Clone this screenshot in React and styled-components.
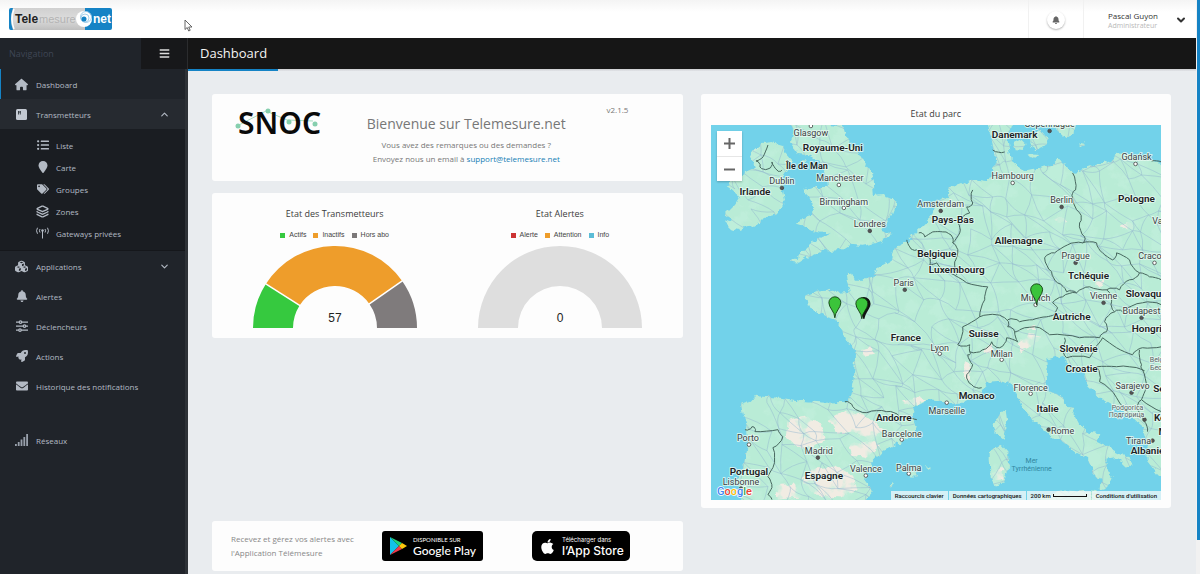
import React from "react";
import styled, { createGlobalStyle } from "styled-components";
import { FaListUl, FaTags, FaBell, FaRocket, FaEnvelope, FaApple, FaBars } from "react-icons/fa";
import { FaHouse, FaCubes, FaLocationPin } from "react-icons/fa6";
import { Layers, ChevronUp, ChevronDown } from "lucide-react";

const GlobalStyle = createGlobalStyle`
  *, *::before, *::after { box-sizing: border-box; }
  body {
    margin: 0;
    background: #e9ecef;
    color: #333;
    font-family: "Open Sans", "Noto Sans", sans-serif;
    font-size: 8px;
  }
  button { font: inherit; color: inherit; border: 0; padding: 0; background: none; cursor: pointer; }
  a { text-decoration: none; color: inherit; }
  h1, h2, p, ul, dl { margin: 0; padding: 0; font-weight: 400; }
  ul { list-style: none; }
  svg { display: block; }
`;

/* ---------- frame ---------- */
const Page = styled.div`
  display: flex;
  min-height: 100vh;
`;
const Column = styled.div`
  flex: 1;
  min-width: 0;
  display: flex;
  flex-direction: column;
`;
const Rail = styled.div`
  width: 4px;
  background: #f1f1f1;
`;
const RailThumb = styled.div`
  height: 94vh;
  margin-left: 1px;
  background: #1583c5;
`;
const Header = styled.header`
  height: 38px;
  display: flex;
  align-items: stretch;
  justify-content: space-between;
  background: linear-gradient(#f4f4f4, #fff 12px);
  padding-left: 9px;
`;
const LogoLink = styled.a`
  align-self: center;
`;
const HeaderTools = styled.div`
  display: flex;
`;
const BellCell = styled.div`
  width: 56px;
  display: flex;
  align-items: center;
  justify-content: center;
  border-left: 1px solid #f1f1f1;
  border-right: 1px solid #f1f1f1;
  padding-top: 2px;
`;
const RoundButton = styled.button`
  width: 18px;
  height: 18px;
  border-radius: 50%;
  display: grid;
  place-items: center;
  background: #fff;
  color: #666;
  box-shadow: 0 1px 2px rgba(0, 0, 0, 0.3);
`;
const UserMenu = styled.button`
  width: 112px;
  display: flex;
  align-items: center;
  justify-content: space-between;
  padding: 2px 9px 0 24px;
  text-align: left;
`;
const UserName = styled.span`
  display: block;
  font-size: 8px;
  line-height: 10px;
  color: #333;
`;
const UserRole = styled.span`
  display: block;
  font-size: 7px;
  line-height: 9px;
  color: #b9b9b9;
`;
const Body = styled.div`
  flex: 1;
  display: flex;
`;
const Pointer = styled.svg`
  position: absolute;
  left: 184px;
  top: 19px;
`;

/* ---------- sidebar ---------- */
const Sidebar = styled.nav`
  width: 188px;
  flex: none;
  background: #20242a;
  border-right: 3px solid #2e3237;
  color: #b3bac4;
`;
const NavHead = styled.div`
  height: 31px;
  margin-right: -3px;
  padding-left: 9px;
  display: flex;
  align-items: center;
  justify-content: space-between;
  font-size: 9px;
  color: #3f4655;
`;
const ToggleButton = styled.button`
  width: 47px;
  height: 31px;
  display: grid;
  place-items: center;
  background: #17181a;
  border-right: 1px solid #2b2c2e;
  color: #ddd;
`;
const NavLink = styled.a`
  height: 30px;
  display: flex;
  align-items: center;
  gap: 8px;
  padding: 0 15px 0 ${(p) => (p.$active ? "14px" : "15px")};
  border-left: ${(p) => (p.$active ? "1px solid #1583c5" : "0")};
  background: ${(p) => (p.$open ? "#262a30" : "transparent")};
  margin-top: ${(p) => (p.$apart ? "24px" : "0")};
`;
const IconBox = styled.span`
  width: 13px;
  display: grid;
  place-items: center;
`;
const NavText = styled.span`
  flex: 1;
  white-space: nowrap;
`;
const SubMenu = styled.ul`
  background: #1a1d22;
  padding: 5px 0 6px;
  border-bottom: 1px solid #15171b;
`;
const SubLink = styled.a`
  height: 22px;
  display: flex;
  align-items: center;
  gap: 7px;
  padding-left: 36px;
`;

/* ---------- content ---------- */
const Main = styled.main`
  flex: 1;
  min-width: 0;
`;
const TitleBar = styled.div`
  height: 31px;
  padding-left: 12px;
  background: #161616;
  color: #f4f4f4;
`;
const PageTitle = styled.h1`
  font-size: 13px;
  line-height: 30px;
`;
const TitleRule = styled.div`
  height: 2px;
  background: linear-gradient(#cdced1, #e2e4e8);
`;
const TitleAccent = styled.div`
  width: 90px;
  height: 2px;
  background: #1583c5;
`;
const Board = styled.div`
  display: grid;
  grid-template-columns: 1fr 1fr;
  align-items: start;
  gap: 18px;
  padding: 23px 25px 2px 24px;
`;
const Stack = styled.div`
  display: flex;
  flex-direction: column;
  gap: 12px;
`;
const Card = styled.section`
  background: #fdfdfd;
  border-radius: 3px;
`;
const WelcomeCard = styled(Card)`
  display: grid;
  grid-template-columns: 132px 1fr 94px;
  height: 87px;
`;
const LogoSlot = styled.div`
  padding: 12px 0 0 23px;
`;
const WelcomeText = styled.div`
  padding-top: 20px;
  text-align: center;
  font-size: 8px;
  line-height: 14px;
  color: #777;
`;
const WelcomeTitle = styled.h2`
  font-size: 14px;
  line-height: 20px;
  margin-bottom: 4px;
  color: #777;
  white-space: nowrap;
`;
const MailLink = styled.a`
  color: #1780b5;
`;
const Version = styled.span`
  padding: 9px 0 0 18px;
  line-height: 14px;
  color: #777;
`;
const GaugeCard = styled(Card)`
  display: grid;
  grid-template-columns: 1fr 1fr;
  padding: 13px 10px 10px;
`;
const GaugeCell = styled.div`
  display: flex;
  flex-direction: column;
  align-items: center;
`;
const CardTitle = styled.h2`
  font-size: 9px;
  line-height: 16px;
  color: #3c3c3c;
  text-align: center;
`;
const Legend = styled.ul`
  display: flex;
  gap: 7px;
  margin: 7px 0 5px;
  font: 7px/12px "Liberation Sans", sans-serif;
  color: #444;
`;
const LegendItem = styled.li`
  display: flex;
  align-items: center;
  gap: 4px;
  &::before {
    content: "";
    width: 5px;
    height: 5px;
    background: ${(p) => p.$color};
  }
`;
const AppCard = styled(Card)`
  margin-top: 171px;
  height: 50px;
  display: grid;
  grid-template-columns: 151px 150px 1fr;
  align-items: center;
  padding-left: 19px;
  color: #888;
  line-height: 14px;
`;
const StoreBadge = styled.a`
  width: ${(p) => p.$width}px;
  height: 30px;
  display: flex;
  align-items: center;
  gap: 6px;
  padding-left: 7px;
  border-radius: ${(p) => p.$radius}px;
  background: #000;
  color: #fff;
  white-space: nowrap;
`;
const BadgeSmall = styled.span`
  display: block;
  font: 6px/8px ${(p) => p.$face}, sans-serif;
`;
const BadgeLarge = styled.span`
  display: block;
  font: 500 12px/13px ${(p) => p.$face}, sans-serif;
`;
const MapCard = styled(Card)`
  padding: 12px 10px 8px;
`;
const MapTitle = styled(CardTitle)`
  margin-bottom: 3px;
`;
const MapFrame = styled.div`
  position: relative;
  background: #72d2ea;
`;
const ZoomControl = styled.div`
  position: absolute;
  left: 6px;
  top: 6px;
  width: 25px;
  background: #fff;
  box-shadow: 0 1px 2px rgba(0, 0, 0, 0.25);
`;
const ZoomButton = styled.button`
  width: 25px;
  height: 25px;
  display: grid;
  place-items: center;
  & + & { border-top: 1px solid #e6e6e6; }
`;
const MapFooter = styled.div`
  position: absolute;
  right: 0;
  bottom: 0;
  display: flex;
  gap: 1px;
  font: 500 6px/9px Roboto, sans-serif;
  color: #111;
`;
const FooterItem = styled.span`
  display: flex;
  align-items: center;
  gap: 2px;
  padding: 0 4px;
  background: rgba(245, 250, 250, 0.75);
`;
const ScaleBar = styled.span`
  width: 34px;
  height: 3px;
  border: 1px solid #111;
  border-top: 0;
`;

/* ---------- icons ---------- */
const ModuleIcon = () => (
  <svg width="11" height="11" viewBox="0 0 11 11">
    <rect width="11" height="11" rx="1.5" fill="#c3c9d2" />
    <path d="M2.500 2v3.500M4.300 2v3.500M2 3h3" stroke="#30353c" strokeWidth="0.900" />
  </svg>
);
const AntennaIcon = () => (
  <svg width="13" height="12" viewBox="0 0 26 24" fill="none" stroke="#b3bac4" strokeWidth="2">
    <path d="M13 7v16M8 11a6 6 0 0 1 0-7M18 11a6 6 0 0 0 0-7M3 13.500a11 11 0 0 1 0-12M23 13.500a11 11 0 0 0 0-12" />
    <circle cx="13" cy="7" r="2.500" fill="#b3bac4" stroke="none" />
  </svg>
);
const SlidersIcon = () => (
  <svg width="12" height="12" viewBox="0 0 24 24" fill="#20242a" stroke="#b3bac4" strokeWidth="2.500">
    <path d="M0 4h24M0 12h24M0 20h24" />
    <circle cx="9" cy="4" r="2.500" />
    <circle cx="17" cy="12" r="2.500" />
    <circle cx="8" cy="20" r="2.500" />
  </svg>
);
const SignalIcon = () => (
  <svg width="13" height="12" viewBox="0 0 13 12" fill="#98a0ab">
    <rect x="0" y="10" width="1.800" height="2" />
    <rect x="2.800" y="8" width="1.800" height="4" />
    <rect x="5.600" y="5.500" width="1.800" height="6.500" />
    <rect x="8.400" y="3" width="1.800" height="9" />
    <rect x="11.200" y="0" width="1.800" height="12" />
  </svg>
);
const PlayIcon = () => (
  <svg width="18" height="20" viewBox="0 0 18 20">
    <path d="M1 1v18l9-9z" fill="#12c2e9" />
    <path d="M1 1l9 9 3-3z" fill="#22d37a" />
    <path d="M1 19l9-9 3 3z" fill="#f0394b" />
    <path d="M13 7l5 3-5 3-3-3z" fill="#fdc70c" />
  </svg>
);

const BrandLogo = () => (
  <svg width="103" height="22" viewBox="0 0 103 22" fontFamily="Liberation Sans, sans-serif" role="img" aria-label="Telemesure.net">
    <defs>
      <linearGradient id="brandGrey" x1="0" y1="0" x2="0" y2="1">
        <stop offset="0" stopColor="#d0d0d0" />
        <stop offset="0.5" stopColor="#dcdcdc" />
        <stop offset="1" stopColor="#bfbfbf" />
      </linearGradient>
    </defs>
    <rect x="1" width="84" height="22" rx="2" fill="url(#brandGrey)" />
    <path d="M4 0H2a2 2 0 0 0-2 2v18a2 2 0 0 0 2 2h2Q0 11 4 0z" fill="#1583c5" />
    <path d="M5 1Q1 11 5 21" fill="none" stroke="#fff" strokeWidth="1.500" />
    <path d="M76 0h25a2 2 0 0 1 2 2v18a2 2 0 0 1-2 2H76z" fill="#1583c5" />
    <circle cx="75" cy="11" r="8" fill="#fff" />
    <circle cx="77" cy="9" r="5.500" fill="none" stroke="#8fc4e6" strokeWidth="0.800" />
    <circle cx="76" cy="10" r="4" fill="none" stroke="#8fc4e6" strokeWidth="0.800" />
    <circle cx="75" cy="11" r="2.500" fill="#1583c5" />
    <text x="6" y="15" fontWeight="700" fontSize="12" fill="#222">Tele</text>
    <text x="30" y="15" fontSize="11" fill="#b3b3b3">mesure</text>
    <text x="84" y="15" fontWeight="700" fontSize="12" fill="#fff">net</text>
  </svg>
);

const SnocLogo = () => (
  <svg width="96" height="44" viewBox="0 0 96 44" role="img" aria-label="SNOC">
    <path d="M4 19L31 5L52 14L78 15" fill="none" stroke="#a6dcc1" strokeWidth="1" />
    <text x="3" y="28" fontFamily="Noto Sans" fontWeight="600" fontSize="30" fill="#0a0a0a">SNOC</text>
    <circle cx="3" cy="20" r="2.500" fill="#86cfae" />
    <circle cx="33" cy="5" r="2.500" fill="#86cfae" />
    <circle cx="54" cy="16" r="2.500" fill="#86cfae" />
    <circle cx="80" cy="18" r="2.500" fill="#86cfae" />
  </svg>
);

/* ---------- half-ring gauge ---------- */
const polar = (r, deg) => {
  const a = (deg * Math.PI) / 180;
  return `${(82 - r * Math.cos(a)).toFixed(2)} ${(82 - r * Math.sin(a)).toFixed(2)}`;
};
const slice = (from, to) =>
  `M${polar(82, from)}A82 82 0 0 1 ${polar(82, to)}L${polar(42, to)}A42 42 0 0 0 ${polar(42, from)}Z`;

function Gauge({ title, legend, slices, total }) {
  return (
    <GaugeCell>
      <CardTitle>{title}</CardTitle>
      <Legend>
        {legend.map(([name, color]) => (
          <LegendItem key={name} $color={color}>{name}</LegendItem>
        ))}
      </Legend>
      <svg width="164" height="82" viewBox="0 0 164 82" role="img" aria-label={title}>
        {slices.map(([from, to, color]) => (
          <path key={from} d={slice(from, to)} fill={color} />
        ))}
        {slices.slice(1).map(([from]) => (
          <path key={from} d={`M${polar(83, from)}L${polar(41, from)}`} stroke="#fff" strokeWidth="1.500" />
        ))}
        <text x="82" y="76" textAnchor="middle" fontFamily="Liberation Sans" fontSize="12" fill="#222">{total}</text>
      </svg>
    </GaugeCell>
  );
}

/* ---------- map ---------- */
const LAND = [
  // Great Britain
  "843,125 847,140 857,150 863,160 871,170 873,182 874,196 883,195 893,198 896,205 892,215 886,223 882,230 892,234 887,239 877,243 863,246 850,245 842,250 832,251 823,250 817,253 807,257 798,263 792,262 803,253 812,243 822,237 832,234 817,232 807,227 797,224 803,218 812,215 813,207 808,198 804,190 813,187 828,187 827,177 823,170 820,162 807,155 798,154 790,142 795,132 789,122",
  "802,164 806,160 804,167",
  // Ireland
  "750,153 762,143 772,142 783,145 787,155 792,161 788,168 782,177 783,190 785,200 782,208 775,215 767,217 753,225 740,230 730,228 725,223 731,219 725,215 735,205 740,197 728,187 733,178 743,173 754,168",
  // mainland
  "988,122 992,140 994,150 996,165 993,173 987,182 973,180 950,188 947,197 937,201 930,218 918,230 907,242 895,247 892,260 880,267 873,277 863,280 855,280 852,273 846,272 847,282 850,292 840,293 833,290 817,292 805,296 807,302 808,307 823,315 833,318 840,325 845,338 855,350 855,362 854,378 850,398 847,402 827,403 800,401 780,398 763,397 755,396 750,402 741,405 743,415 747,427 748,445 743,468 738,477 735,485 741,490 740,504 863,504 873,492 865,482 868,468 882,452 897,445 913,435 918,427 913,417 914,407 927,400 947,403 963,403 980,395 988,383 1002,382 1013,387 1018,395 1023,408 1035,422 1052,437 1063,442 1077,453 1088,458 1093,472 1102,482 1101,490 1108,488 1113,478 1107,468 1107,460 1117,458 1127,468 1133,467 1130,458 1117,452 1097,442 1102,434 1090,432 1080,425 1072,410 1063,398 1048,391 1045,383 1047,368 1047,360 1063,355 1066,362 1067,372 1075,368 1082,372 1090,388 1103,400 1117,408 1133,418 1145,428 1148,442 1148,462 1158,475 1166,480 1166,164 1150,160 1137,160 1130,152 1122,153 1107,162 1083,170 1073,172 1065,165 1060,158 1053,165 1037,168 1027,170 1018,167 1013,160 1010,153 1008,140 1013,122",
  // Danish islands, Sweden, Bornholm
  "1014,143 1022,139 1027,144 1023,150 1016,149",
  "1030,135 1042,130 1048,138 1045,147 1037,150 1031,146",
  "1028,153 1040,154 1038,158 1030,157",
  "1053,121 1058,132 1066,138 1075,134 1076,121",
  "1081,142 1086,143 1086,147 1081,146",
  // Corsica, Sardinia
  "1003,412 1006,411 1008,424 1003,439 996,434 994,424 996,418",
  "990,451 1003,445 1009,452 1008,470 1004,484 995,486 991,478 990,462",
  // Balearics, Sicily
  "909,473 917,472 917,478 911,478",
  "926,467 931,467 930,470",
  "889,485 893,484 892,488",
  "1040,497 1062,491 1095,492 1103,496 1095,505 1040,505",
];

const BORDERS = [
  "768,145 763,157 756,161 760,167 768,169 772,162 777,170 782,170",
  "993,150 1005,152",
  "973,190 973,203 967,207 970,213 958,223 960,233 953,243 958,253 955,262 957,275",
  "919,233 925,237 933,232 943,232 953,238 953,243",
  "907,240 910,247 917,250 930,258 930,265 937,263 950,273 967,283 988,287 985,300 980,317",
  "997,315 980,317 963,327 958,345 970,345 970,352 983,350 992,342 1000,348 1007,338 1018,342 1015,332 1008,327 1007,320 997,315",
  "970,352 968,355 973,365 967,375 972,385 982,388",
  "1008,320 1020,322 1033,320 1047,317 1055,315 1058,308 1053,303 1063,297 1077,293 1090,287 1107,290 1120,290 1130,280 1140,273",
  "1045,258 1052,272 1058,283 1067,292 1077,293",
  "1045,258 1055,253 1068,245 1083,243 1097,243 1103,253 1113,260 1117,253 1130,260 1140,273 1150,277 1162,280",
  "1073,173 1076,190 1073,198 1080,213 1080,223 1085,237 1083,243",
  "1107,290 1112,302 1115,312 1105,322 1107,332 1100,338 1080,338 1050,335 1040,328 1020,330 1015,332",
  "1115,312 1123,312 1143,303 1162,305",
  "1103,338 1117,348 1133,355 1143,348 1162,347",
  "1103,338 1097,346 1090,358 1067,358 1062,348 1065,338",
  "1097,367 1117,367 1143,370 1147,388 1142,400 1162,412",
  "1097,367 1100,382 1117,398 1133,417",
  "1140,350 1142,365 1145,371",
  "1142,400 1138,410 1145,422 1148,432",
  "845,402 853,407 867,413 887,412 900,417 917,420",
  "745,430 752,427 755,432 778,430 783,437 773,448 773,468 768,477 772,488 768,495 772,500",
  "1152,161 1162,162",
];

// Adds two wobbling points to every leg so that borders do not run straight.
const winding = (points) => {
  const list = points.split(" ").map((p) => p.split(",").map(Number));
  return list
    .flatMap(([x, y], n) => {
      if (n === 0) return [[x, y]];
      const [u, v] = list[n - 1];
      const bend = (t, k) => {
        const w = Math.sin(x * 12.9 + y * 78.2 + k * 37.7) * 1.6;
        const len = Math.hypot(x - u, y - v) || 1;
        return [u + (x - u) * t - ((y - v) / len) * w, v + (y - v) * t + ((x - u) / len) * w];
      };
      return [bend(0.25, 1), bend(0.5, 2), bend(0.75, 3), [x, y]];
    })
    .map(([x, y]) => `${x.toFixed(1)},${y.toFixed(1)}`)
    .join(" ");
};

const DRY = [
  "788,420 805,416 822,424 826,440 812,450 795,445 786,436",
  "828,420 846,410 870,418 884,430 872,440 852,432 838,434",
  "850,446 870,440 880,446 866,458 852,456",
  "800,478 815,468 835,466 852,476 858,490 840,498 815,496",
  "776,486 795,484 800,498 778,500",
  "903,402 920,396 926,400 912,406",
  "862,350 872,348 874,354 864,356",
  "965,362 971,366 970,384 964,378",
  "984,348 992,344 994,352 985,354",
  "1018,344 1030,334 1042,336 1030,348 1020,352",
  "1026,330 1036,326 1034,330",
  "994,474 1002,468 1004,480 996,482",
  "752,148 758,144 756,152",
  "1120,226 1128,223 1134,226 1130,229",
  "1054,220 1062,217 1068,221 1060,222",
  "1095,282 1104,281 1102,287 1096,286",
];

const CITIES = [
  ["Glasgow", 811, 136, 811, 126], ["Dublin", 782, 184, 782, 188, 1], ["Manchester", 840, 181, 839, 185],
  ["Birmingham", 844, 205, 844, 208], ["Londres", 870, 227, 870, 231, 1], ["Paris", 904, 286, 905, 290, 1],
  ["Amsterdam", 941, 207, 941, 211, 1], ["Copenhague", 1050, 127, 1050, 131, 1], ["Gdańsk", 1137, 160, 1136, 164],
  ["Hambourg", 1013, 179, 1013, 183], ["Berlin", 1062, 203, 1062, 207, 1], ["Varsovie", 1170, 224, 1175, 228],
  ["Prague", 1076, 259, 1076, 263, 1], ["Cracovie", 1156, 259, 1155, 263], ["Munich", 1036, 301, 1036, 305],
  ["Vienne", 1104, 299, 1104, 303, 1], ["Budapest", 1142, 314, 1142, 318, 1], ["Lyon", 940, 351, 940, 354],
  ["Milan", 1002, 357, 1002, 360], ["Florence", 1031, 391, 1031, 394], ["Marseille", 947, 414, 947, 403],
  ["Sarajevo", 1133, 389, 1132, 393, 1], ["Rome", 1063, 434, 1049, 430, 1], ["Tirana", 1139, 444, 1153, 441, 1],
  ["Palma", 909, 471, 909, 474], ["Valence", 866, 472, 866, 476], ["Barcelone", 902, 437, 902, 440],
  ["Madrid", 819, 454, 818, 458, 1], ["Porto", 748, 441, 749, 445], ["Lisbonne", 741, 485, 741, 489, 1],
];
const COUNTRIES = [
  ["Royaume-Uni", 833, 151], ["Irlande", 755, 195], ["Pays-Bas", 953, 223], ["Belgique", 937, 257],
  ["Luxembourg", 957, 273], ["Danemark", 1015, 138], ["Pologne", 1137, 202], ["Allemagne", 1019, 244],
  ["Tchéquie", 1089, 279], ["Slovaquie", 1148, 297], ["Autriche", 1072, 320], ["Suisse", 984, 337],
  ["Hongrie", 1150, 332], ["Slovénie", 1079, 352], ["Croatie", 1082, 372], ["France", 906, 341],
  ["Monaco", 977, 399], ["Serbie", 1168, 392], ["Italie", 1048, 412], ["Kosovo", 1171, 421],
  ["Albanie", 1148, 454], ["Andorre", 894, 421], ["Espagne", 824, 479], ["Portugal", 749, 475],
];

// Road network: jittered lattice joined to its neighbours.
const jitter = (i, j, k) => {
  const v = Math.sin(i * 127.1 + j * 311.7 + k * 74.7) * 43758.5453;
  return v - Math.floor(v);
};
const node = (i, j) => [
  Math.round(700 + i * 19 + jitter(i, j, 1) * 18),
  Math.round(115 + j * 18 + jitter(i, j, 2) * 17),
];
const roads = [];
for (let i = 0; i < 25; i++) {
  for (let j = 0; j < 22; j++) {
    const [x, y] = node(i, j);
    [[1, 0], [0, 1], [1, 1]].forEach(([di, dj], k) => {
      if (jitter(i, j, k + 3) > 0.75) return;
      const [u, v] = node(i + di, j + dj);
      const bx = Math.round((x + u) / 2 + jitter(i, j, k + 7) * 8 - 4);
      const by = Math.round((y + v) / 2 + jitter(i, j, k + 9) * 8 - 4);
      roads.push(`M${x} ${y}Q${bx} ${by} ${u} ${v}`);
    });
  }
}

const Pin = ({ x, y, shadow }) => (
  <g transform={`translate(${x} ${y})`}>
    {shadow && <path d="M2 0C2 -6 -4 -10 -4 -15a6 6 0 0 1 12 0C8 -10 2 -6 2 0z" fill="#111" stroke="#111" strokeWidth="1.500" />}
    <path d="M0 0C0 -6 -6 -10 -6 -15a6 6 0 0 1 12 0C6 -10 0 -6 0 0z" fill="#3bc43b" stroke="#123d12" strokeWidth="0.900" />
  </g>
);

const halo = { stroke: "#e9faf3", strokeWidth: 2, strokeLinejoin: "round", paintOrder: "stroke", strokeOpacity: 0.8 };

function EuropeMap() {
  return (
    <svg width="100%" viewBox="711 125 451 375" fontFamily="Roboto, sans-serif" role="img" aria-label="Etat du parc">
      <defs>
        <filter id="rough" x="-2%" y="-2%" width="104%" height="104%">
          <feTurbulence type="fractalNoise" baseFrequency="0.14" numOctaves="3" seed="4" />
          <feDisplacementMap in="SourceGraphic" scale="7" xChannelSelector="R" yChannelSelector="G" />
        </filter>
        <filter id="woods" x="0" y="0" width="100%" height="100%">
          <feTurbulence type="fractalNoise" baseFrequency="0.06" numOctaves="4" seed="11" />
          <feColorMatrix values="0 0 0 0 0.53  0 0 0 0 0.86  0 0 0 0 0.71  6 0 0 0 -3.100" />
        </filter>
        <mask id="landMask" maskUnits="userSpaceOnUse" x="700" y="115" width="470" height="395">
          <g filter="url(#rough)" fill="#fff">
            {LAND.map((points) => <polygon key={points} points={points} />)}
          </g>
        </mask>
      </defs>
      <rect x="711" y="125" width="451" height="375" fill="#72d2ea" />
      <g mask="url(#landMask)">
        <rect x="700" y="115" width="470" height="395" fill="#b9ecd6" />
        <g filter="url(#rough)" fill="#f1ece3">
          {DRY.map((points) => <polygon key={points} points={points} />)}
        </g>
        <rect x="700" y="115" width="470" height="395" filter="url(#woods)" opacity="0.800" />
        <path d={roads.join("")} fill="none" stroke="#91b5cf" strokeWidth="0.800" opacity="0.600" />
      </g>
      <g fill="none" stroke="#47665e" strokeWidth="1" strokeLinejoin="round">
        {BORDERS.map((points) => <polyline key={points} points={winding(points)} />)}
      </g>
      <g stroke="#444" strokeWidth="0.800">
        {CITIES.map(([name, , , cx, cy, capital]) => (
          <circle key={name} cx={cx} cy={cy} r="1.800" fill={capital ? "#555" : "#fff"} />
        ))}
        <circle cx="1145" cy="420" r="1.800" fill="#555" />
      </g>
      <g fontSize="9" fill="#3c4043" textAnchor="middle" {...halo}>
        {CITIES.map(([name, x, y]) => <text key={name} x={x} y={y}>{name}</text>)}
      </g>
      <g fontSize="10" fontWeight="600" fill="#202124" textAnchor="middle" {...halo}>
        {COUNTRIES.map(([name, x, y]) => <text key={name} x={x} y={y}>{name}</text>)}
        <text x="807" y="169" fontSize="9">Île de Man</text>
        <text x="1159" y="435" textAnchor="start">Macédoine</text>
      </g>
      <g fontSize="7" fill="#5b6467" textAnchor="middle" {...halo}>
        <text x="1128" y="410">Podgorica</text>
        <text x="1127" y="417">Подгорица</text>
        <text x="1164" y="362">Belgrade</text>
        <text x="1164" y="370">Београд</text>
      </g>
      <g fontSize="7" fill="#31869f" textAnchor="middle">
        <text x="1032" y="463">Mer</text>
        <text x="1032" y="471">Tyrrhénienne</text>
      </g>
      <Pin x={835} y={318} />
      <Pin x={862} y={319} shadow />
      <Pin x={1037} y={305} />
      <text x="717" y="495" fontSize="11" fontWeight="500" stroke="#fff" strokeWidth="1.500" paintOrder="stroke">
        <tspan fill="#4285f4">G</tspan><tspan fill="#ea4335">o</tspan><tspan fill="#fbbc05">o</tspan>
        <tspan fill="#4285f4">g</tspan><tspan fill="#34a853">l</tspan><tspan fill="#ea4335">e</tspan>
      </text>
    </svg>
  );
}

const TRANSMITTER_LINKS = [
  ["Liste", <FaListUl size={12} />],
  ["Carte", <FaLocationPin size={12} />],
  ["Groupes", <FaTags size={12} />],
  ["Zones", <Layers size={13} strokeWidth={2.5} />],
  ["Gateways privées", <AntennaIcon />],
];

function NavItem({ icon, children, chevron: Chevron, ...rest }) {
  return (
    <NavLink href="#" {...rest}>
      <IconBox>{icon}</IconBox>
      <NavText>{children}</NavText>
      {Chevron && <Chevron size={11} strokeWidth={2.5} />}
    </NavLink>
  );
}

export default function App() {
  return (
    <Page>
      <GlobalStyle />
      <Column>
        <Header>
          <LogoLink href="#"><BrandLogo /></LogoLink>
          <HeaderTools>
            <BellCell>
              <RoundButton aria-label="Alertes"><FaBell size={8} /></RoundButton>
            </BellCell>
            <UserMenu>
              <span>
                <UserName>Pascal Guyon</UserName>
                <UserRole>Administrateur</UserRole>
              </span>
              <ChevronDown size={12} strokeWidth={4} />
            </UserMenu>
          </HeaderTools>
        </Header>
        <Body>
          <Sidebar>
            <NavHead>
              Navigation
              <ToggleButton aria-label="Menu"><FaBars size={11} /></ToggleButton>
            </NavHead>
            <NavItem $active icon={<FaHouse size={13} />}>Dashboard</NavItem>
            <NavItem $open icon={<ModuleIcon />} chevron={ChevronUp}>Transmetteurs</NavItem>
            <SubMenu>
              {TRANSMITTER_LINKS.map(([name, icon]) => (
                <li key={name}>
                  <SubLink href="#"><IconBox>{icon}</IconBox>{name}</SubLink>
                </li>
              ))}
            </SubMenu>
            <NavItem icon={<FaCubes size={13} />} chevron={ChevronDown}>Applications</NavItem>
            <NavItem icon={<FaBell size={12} />}>Alertes</NavItem>
            <NavItem icon={<SlidersIcon />}>Déclencheurs</NavItem>
            <NavItem icon={<FaRocket size={12} />}>Actions</NavItem>
            <NavItem icon={<FaEnvelope size={12} />}>Historique des notifications</NavItem>
            <NavItem $apart icon={<SignalIcon />}>Réseaux</NavItem>
          </Sidebar>
          <Main>
            <TitleBar><PageTitle>Dashboard</PageTitle></TitleBar>
            <TitleRule><TitleAccent /></TitleRule>
            <Board>
              <Stack>
                <WelcomeCard>
                  <LogoSlot><SnocLogo /></LogoSlot>
                  <WelcomeText>
                    <WelcomeTitle>Bienvenue sur Telemesure.net</WelcomeTitle>
                    <p>Vous avez des remarques ou des demandes ?</p>
                    <p>Envoyez nous un email à <MailLink href="mailto:support@telemesure.net">support@telemesure.net</MailLink></p>
                  </WelcomeText>
                  <Version>v2.1.5</Version>
                </WelcomeCard>
                <GaugeCard>
                  <Gauge
                    title="Etat des Transmetteurs"
                    legend={[["Actifs", "#36c93f"], ["Inactifs", "#ee9d2b"], ["Hors abo", "#7b7879"]]}
                    slices={[[0, 32.5, "#36c93f"], [32.5, 145, "#ee9d2b"], [145, 180, "#7f7b7c"]]}
                    total={57}
                  />
                  <Gauge
                    title="Etat Alertes"
                    legend={[["Alerte", "#cc3333"], ["Attention", "#ee9d2b"], ["Info", "#5bbcd6"]]}
                    slices={[[0, 180, "#dedede"]]}
                    total={0}
                  />
                </GaugeCard>
                <AppCard>
                  <p>Recevez et gérez vos alertes avec<br />l'Application Télémesure</p>
                  <StoreBadge href="#" $width={101} $radius={3}>
                    <PlayIcon />
                    <span>
                      <BadgeSmall $face="Lato">DISPONIBLE SUR</BadgeSmall>
                      <BadgeLarge $face="Lato">Google Play</BadgeLarge>
                    </span>
                  </StoreBadge>
                  <StoreBadge href="#" $width={98} $radius={5}>
                    <FaApple size={17} />
                    <span>
                      <BadgeSmall $face="Inter">Télécharger dans</BadgeSmall>
                      <BadgeLarge $face="Inter">l’App Store</BadgeLarge>
                    </span>
                  </StoreBadge>
                </AppCard>
              </Stack>
              <MapCard>
                <MapTitle>Etat du parc</MapTitle>
                <MapFrame>
                  <EuropeMap />
                  <ZoomControl>
                    <ZoomButton aria-label="Zoom avant">
                      <svg width="11" height="11" viewBox="0 0 11 11"><path d="M5.500 0v11M0 5.500h11" stroke="#666" strokeWidth="2" /></svg>
                    </ZoomButton>
                    <ZoomButton aria-label="Zoom arrière">
                      <svg width="11" height="11" viewBox="0 0 11 11"><path d="M0 5.500h11" stroke="#666" strokeWidth="2" /></svg>
                    </ZoomButton>
                  </ZoomControl>
                  <MapFooter>
                    <FooterItem as="button">Raccourcis clavier</FooterItem>
                    <FooterItem>Données cartographiques</FooterItem>
                    <FooterItem>200 km <ScaleBar /></FooterItem>
                    <FooterItem as="a" href="#">Conditions d'utilisation</FooterItem>
                  </MapFooter>
                </MapFrame>
              </MapCard>
            </Board>
          </Main>
        </Body>
      </Column>
      <Rail><RailThumb /></Rail>
      <Pointer width="9" height="13" viewBox="0 0 9 13">
        <path d="M1 1v9.500l2.200-2 1.500 3.500 1.500-.700-1.500-3.300H8z" fill="#fff" stroke="#555" strokeWidth="0.900" />
      </Pointer>
    </Page>
  );
}
